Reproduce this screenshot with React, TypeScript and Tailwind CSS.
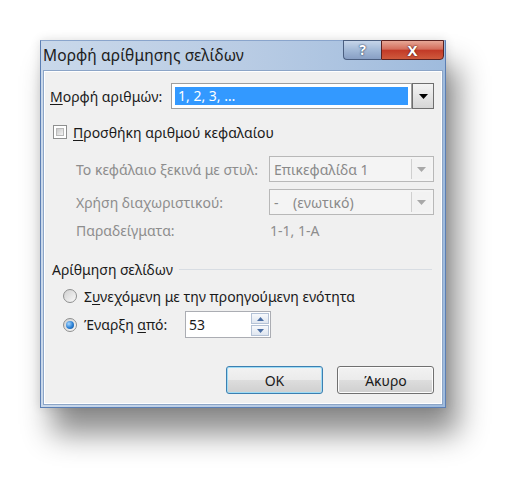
import React from "react";

const font = { fontFamily: '"Noto Sans", "Open Sans", "DejaVu Sans", sans-serif' };

function Arrow({ color = "#000" }: { color?: string }) {
  return (
    <svg width="9" height="5" viewBox="0 0 9 5">
      <polygon points="0,0 9,0 4.5,5" fill={color} />
    </svg>
  );
}

function Checkbox() {
  return (
    <div className="w-[14px] h-[14px] border border-[#8e8f8f] bg-white p-[2px] shrink-0">
      <div className="w-full h-full bg-gradient-to-br from-[#c9c9c9] to-[#f4f4f4] border border-[#b9b9b9]" />
    </div>
  );
}

function Radio({ checked }: { checked?: boolean }) {
  return (
    <div className="w-[14px] h-[14px] rounded-full border border-[#8e8f8f] bg-gradient-to-br from-[#d0d0d0] to-[#fafafa] flex items-center justify-center shrink-0">
      {checked && (
        <div className="w-[8px] h-[8px] rounded-full bg-[radial-gradient(circle_at_35%_35%,#a8d8ff,#2a7fd4_55%,#15508e)]" />
      )}
    </div>
  );
}

function DisabledCombo({ text }: { text: React.ReactNode }) {
  return (
    <div className="w-[165px] h-[26px] border border-[#b8b8b8] bg-[#f4f4f4] flex items-stretch shrink-0">
      <div className="flex-1 flex items-center pl-[4px] text-[#8a8a8a]">{text}</div>
      <div className="w-[20px] border-l border-[#cfcfcf] m-[2px] flex items-center justify-center bg-[#f2f2f2]">
        <Arrow color="#a8a8a8" />
      </div>
    </div>
  );
}

export default function App() {
  return (
    <div className="w-[526px] h-[487px] bg-white overflow-hidden text-[14px] text-[#1a1a1a]" style={font}>
      <div className="pt-[40px] pl-[40px]">
        <div className="w-[406px] h-[368px] flex flex-col border border-[#5c7fb4] border-t-[#8aa5cc] bg-gradient-to-r from-[#c9d8ea] via-[#b9cce4] to-[#9fbbdd] shadow-[12px_26px_28px_rgba(0,0,0,0.45),0_0_10px_rgba(0,0,0,0.12)]">
          {/* title bar */}
          <div className="h-[29px] flex items-start shrink-0">
            <div className="pl-[2px] pt-[5px] text-[15.5px] text-[#202020] leading-[18px] tracking-[0.1px]">
              Μορφή αρίθμησης σελίδων
            </div>
            <div className="ml-auto flex mr-[1px] -mt-[1px]">
              <div className="w-[38px] h-[20px] border border-[#4b5f80] border-r-0 rounded-bl-[4px] bg-gradient-to-b from-[#c6d5e9] via-[#a2b9d7] to-[#889fc4] flex items-center justify-center">
                <span className="text-white font-bold text-[14px] leading-none [text-shadow:0_0_2px_#2b3d5e,0_0_1px_#2b3d5e]">?</span>
              </div>
              <div className="w-[63px] h-[20px] border border-[#5b2220] rounded-br-[4px] bg-[linear-gradient(#e7a796,#d46e5c_45%,#c23a27_52%,#cf5a3d)] flex items-center justify-center">
                <span className="text-white font-bold text-[15px] leading-none [text-shadow:0_0_2px_#5a1a12,0_0_1px_#5a1a12]">X</span>
              </div>
            </div>
          </div>
          {/* panel */}
          <div className="flex-1 mx-[2px] mb-[2px] border border-[#8ca5c7] bg-[#f0f0f0] shadow-[inset_0_0_0_1px_#ffffff] flex flex-col pl-[6px] pr-[8px]">
            {/* row 1 */}
            <div className="mt-[12px] h-[26px] flex items-center">
              <div className="w-[121px]">
                <span className="underline underline-offset-2">Μ</span>ορφή αριθμών:
              </div>
              <div className="flex-1 h-full flex">
                <div className="flex-1 border border-[#9e9e9e] bg-white p-[3px] flex">
                  <div className="flex-1 bg-[#3399ff] text-white flex items-center pl-[3px] leading-none">1, 2, 3, …</div>
                </div>
                <div className="w-[22px] border border-[#6e6e6e] bg-gradient-to-b from-[#f4f4f4] to-[#d6d6d6] flex items-center justify-center">
                  <Arrow />
                </div>
              </div>
            </div>
            {/* checkbox */}
            <div className="mt-[13px] h-[20px] flex items-center pl-[3px] gap-[6px]">
              <Checkbox />
              <div>
                <span className="underline underline-offset-2">Π</span>ροσθήκη αριθμού κεφαλαίου
              </div>
            </div>
            {/* disabled rows */}
            <div className="mt-[14px] h-[26px] flex items-center pl-[26px] text-[#8d8d8d]">
              <div className="flex-1">Το κεφάλαιο ξεκινά με στυλ:</div>
              <DisabledCombo text="Επικεφαλίδα 1" />
            </div>
            <div className="mt-[7px] h-[26px] flex items-center pl-[26px] text-[#8d8d8d]">
              <div className="flex-1">Χρήση διαχωριστικού:</div>
              <DisabledCombo text={<span className="whitespace-pre">-    (ενωτικό)</span>} />
            </div>
            <div className="mt-[6px] h-[18px] flex items-center pl-[26px] text-[#8d8d8d]">
              <div className="flex-1">Παραδείγματα:</div>
              <div className="w-[165px] pl-[1px]">1-1, 1-A</div>
            </div>
            {/* section */}
            <div className="mt-[21px] h-[18px] flex items-center pl-[2px] gap-[6px]">
              <div>Αρίθμηση σελίδων</div>
              <div className="flex-1 h-px bg-[#d8dde3] mr-[2px]" />
            </div>
            <div className="mt-[8px] h-[20px] flex items-center pl-[13px] gap-[7px]">
              <Radio />
              <div>
                Σ<span className="underline underline-offset-2">υ</span>νεχόμενη με την προηγούμενη ενότητα
              </div>
            </div>
            <div className="mt-[5px] h-[27px] flex items-center pl-[13px] gap-[7px]">
              <Radio checked />
              <div className="w-[94px]">
                Έναρξη <span className="underline underline-offset-2">α</span>πό:
              </div>
              <div className="w-[86px] h-full border border-[#abadb3] bg-white flex items-center">
                <div className="flex-1 pl-[3px]">53</div>
                <div className="w-[20px] h-full flex flex-col p-[1px] gap-[1px]">
                  <div className="flex-1 border border-[#b4c2d6] bg-gradient-to-b from-[#f7f9fc] to-[#dfe6f0] flex items-center justify-center">
                    <svg width="7" height="4" viewBox="0 0 7 4"><polygon points="0,4 7,4 3.5,0" fill="#4a6ea5" /></svg>
                  </div>
                  <div className="flex-1 border border-[#b4c2d6] bg-gradient-to-b from-[#f7f9fc] to-[#dfe6f0] flex items-center justify-center">
                    <svg width="7" height="4" viewBox="0 0 7 4"><polygon points="0,0 7,0 3.5,4" fill="#4a6ea5" /></svg>
                  </div>
                </div>
              </div>
            </div>
            {/* buttons */}
            <div className="mt-[28px] h-[28px] flex justify-end gap-[14px]">
              <div className="w-[97px] h-full rounded-[3px] border border-[#3c7fb1] shadow-[inset_0_0_0_1px_#9fdcf5] bg-[linear-gradient(#f2f2f2,#ebebeb_50%,#dddddd_51%,#cfcfcf)] flex items-center justify-center">
                OK
              </div>
              <div className="w-[97px] h-full rounded-[3px] border border-[#707070] shadow-[inset_0_0_0_1px_#fcfcfc] bg-[linear-gradient(#f2f2f2,#ebebeb_50%,#dddddd_51%,#cfcfcf)] flex items-center justify-center">
                Άκυρο
              </div>
            </div>
          </div>
        </div>
      </div>
    </div>
  );
}
